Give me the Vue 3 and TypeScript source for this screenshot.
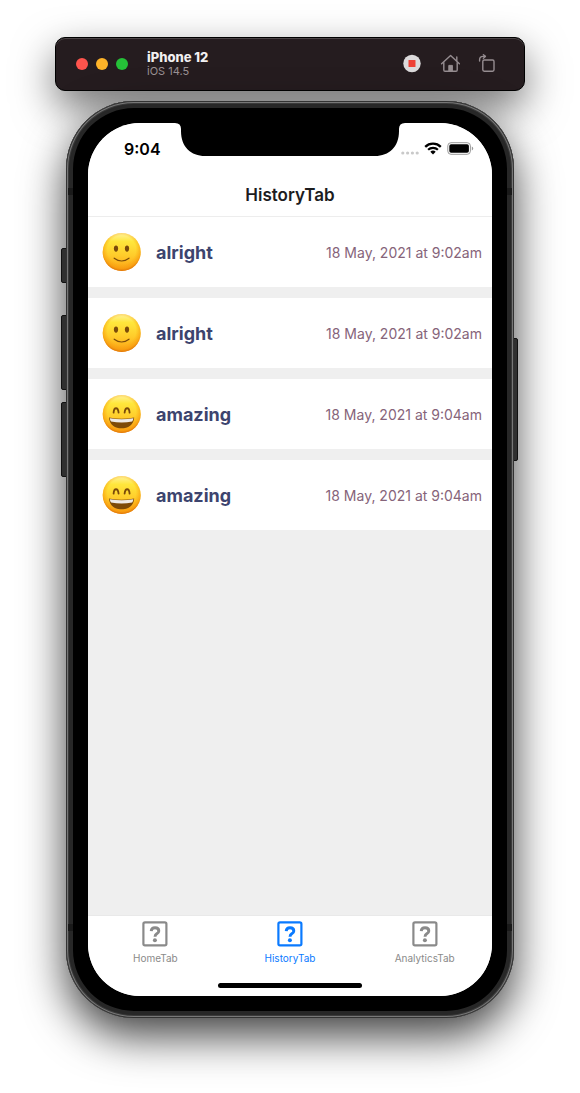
<script setup lang="ts">
type Mood = 'alright' | 'amazing'

interface Entry {
  id: number
  mood: Mood
  date: string
}

interface Tab {
  id: string
  active: boolean
}

const entries: Entry[] = [
  { id: 1, mood: 'alright', date: '18 May, 2021 at 9:02am' },
  { id: 2, mood: 'alright', date: '18 May, 2021 at 9:02am' },
  { id: 3, mood: 'amazing', date: '18 May, 2021 at 9:04am' },
  { id: 4, mood: 'amazing', date: '18 May, 2021 at 9:04am' },
]

const tabs: Tab[] = [
  { id: 'HomeTab', active: false },
  { id: 'HistoryTab', active: true },
  { id: 'AnalyticsTab', active: false },
]
</script>

<template>
  <div class="desktop">
    <header class="toolbar">
      <div class="lights">
        <button class="light red" type="button" aria-label="Close"></button>
        <button class="light amber" type="button" aria-label="Minimize"></button>
        <button class="light green" type="button" aria-label="Zoom"></button>
      </div>
      <div class="device-name">
        <strong>iPhone 12</strong>
        <span>iOS 14.5</span>
      </div>
      <div class="actions">
        <button type="button" aria-label="Stop recording">
          <svg width="20" height="20" viewBox="0 0 20 20">
            <circle cx="10" cy="9.5" r="8.7" fill="#dcdadb" />
            <rect x="6.5" y="6" width="7" height="7" rx=".6" fill="#ee4035" />
          </svg>
        </button>
        <button type="button" aria-label="Home">
          <svg width="20" height="20" viewBox="0 0 20 20" fill="none" stroke="#968d91" stroke-width="1.4" stroke-linecap="round" stroke-linejoin="round">
            <path d="M1.6 9.8 L10.6 1.6 L19.4 9.8" />
            <path d="M3.8 8.6 V16 Q3.8 17.3 5 17.3 H16 Q17.2 17.3 17.2 16 V8.6" />
            <path d="M16.8 6.6 V3" />
            <path d="M8.8 17 V11.4 H12.4 V17 Z" fill="#968d91" stroke-width="1" />
          </svg>
        </button>
        <button type="button" aria-label="Rotate">
          <svg width="20" height="20" viewBox="0 0 20 20" fill="none" stroke="#968d91" stroke-width="1.4" stroke-linecap="round" stroke-linejoin="round">
            <rect x="4.8" y="6" width="11.2" height="11.2" rx="1.4" />
            <path d="M1.6 7 V5.8 Q1.6 2.4 5 2.4 H7" />
            <path d="M5.4 .8 L7.4 2.4 L5.4 4.2" />
          </svg>
        </button>
      </div>
    </header>

    <main class="phone">
      <i class="key mute"></i>
      <i class="key volume-up"></i>
      <i class="key volume-down"></i>
      <i class="key power"></i>
      <div class="frame">
        <i class="band band-top"></i>
        <i class="band band-bottom"></i>
        <div class="screen">
          <svg class="notch" width="230" height="33" viewBox="0 0 230 33">
            <path d="M0 0 Q6 0 6 6 V8 C6 24 16 33 30 33 H200 C214 33 224 24 224 8 V6 Q224 0 230 0 Z" fill="#000" />
          </svg>
          <div class="status">
            <time>9:04</time>
            <div class="indicators">
              <svg width="18" height="14" viewBox="0 0 18 14" fill="#c9c9c9">
                <circle cx="1.8" cy="11" r="1.6" /><circle cx="6.6" cy="11" r="1.6" />
                <circle cx="11.4" cy="11" r="1.6" /><circle cx="16.2" cy="11" r="1.6" />
              </svg>
              <svg width="18" height="14" viewBox="0 0 18 14">
                <path d="M1.2 4.8 A11.2 11.2 0 0 1 16.8 4.8" fill="none" stroke="#000" stroke-width="2.3" />
                <path d="M4.1 7.8 A7 7 0 0 1 13.9 7.8" fill="none" stroke="#000" stroke-width="2.2" />
                <path d="M6.3 9.8 A4 4 0 0 1 11.7 9.8 L9 12.6 Z" fill="#000" />
              </svg>
              <svg width="27" height="14" viewBox="0 0 27 14">
                <rect x=".8" y=".7" width="22.6" height="11.6" rx="3.2" fill="none" stroke="#999" />
                <rect x="2.3" y="2.2" width="19.6" height="8.6" rx="1.8" fill="#000" />
                <path d="M24.8 4.6 Q26.2 5.1 26.2 6.5 Q26.2 7.9 24.8 8.4 Z" fill="#999" />
              </svg>
            </div>
          </div>
          <h1 class="title">HistoryTab</h1>
          <ul class="list">
            <li v-for="entry in entries" :key="entry.id" class="row">
              <svg class="face" width="40" height="40" viewBox="0 0 40 40">
                <defs>
                  <linearGradient :id="`skin-${entry.id}`" x1="0" y1="0" x2="0" y2="1">
                    <stop offset="0" stop-color="#fff2a0" />
                    <stop offset=".22" stop-color="#ffe73c" />
                    <stop offset=".6" stop-color="#ffcb2a" />
                    <stop offset="1" stop-color="#fb9f14" />
                  </linearGradient>
                  <radialGradient :id="`rim-${entry.id}`" cx=".5" cy=".44" r=".56">
                    <stop offset=".66" stop-color="#f9a40c" stop-opacity="0" />
                    <stop offset=".88" stop-color="#f6980c" stop-opacity=".6" />
                    <stop offset="1" stop-color="#dc6f08" stop-opacity=".95" />
                  </radialGradient>
                </defs>
                <circle cx="19.7" cy="20" r="19" :fill="`url(#skin-${entry.id})`" />
                <circle cx="19.7" cy="20" r="19" :fill="`url(#rim-${entry.id})`" />
                <g v-if="entry.mood === 'alright'">
                  <ellipse cx="14" cy="16.6" rx="2.1" ry="3.1" fill="#7a4a0a" />
                  <ellipse cx="25" cy="16.6" rx="2.1" ry="3.1" fill="#7a4a0a" />
                  <path d="M12.2 26.2 Q19.6 31.8 27 26.2" fill="none" stroke="#7a4a0a" stroke-width="1.2" stroke-linecap="round" />
                </g>
                <g v-else>
                  <path d="M11.6 18.6 C12 12.8 16 12.8 16.6 18.6" fill="none" stroke="#7a4a0a" stroke-width="1.8" stroke-linecap="round" />
                  <path d="M22.6 18.6 C23.2 12.8 27.2 12.8 27.6 18.6" fill="none" stroke="#7a4a0a" stroke-width="1.8" stroke-linecap="round" />
                  <path d="M7 23.4 Q19.6 26 32.2 23.4 C31.6 38 7.6 38 7 23.4 Z" fill="#7d4a08" />
                  <path d="M7.8 24.2 Q19.6 26.4 31.4 24.2 Q31.2 26 30.2 27.4 Q19.6 29.4 9 27.4 Q8 26 7.8 24.2 Z" fill="#eeeae6" />
                </g>
              </svg>
              <span class="mood">{{ entry.mood }}</span>
              <time class="date">{{ entry.date }}</time>
            </li>
          </ul>
          <footer class="footer">
            <nav class="tabs">
              <a v-for="tab in tabs" :key="tab.id" :href="`#${tab.id}`" class="tab" :class="{ active: tab.active }">
                <svg width="26" height="26" viewBox="0 0 26 26" fill="none" stroke="currentColor">
                  <rect x="1.4" y="1.4" width="23" height="23" rx="1.6" stroke-width="2.2" />
                  <path d="M9.2 10.2 Q9.4 6.8 13 6.8 Q16.8 6.8 16.8 10 Q16.8 11.4 15 12.6 Q13 13.8 13 15.8" stroke-width="2.9" />
                  <circle cx="12.9" cy="19.2" r="2" fill="currentColor" stroke="none" />
                </svg>
                <span>{{ tab.id }}</span>
              </a>
            </nav>
            <div class="home-bar"></div>
          </footer>
        </div>
      </div>
    </main>
  </div>
</template>

<style>
body {
  margin: 0;
  background: #fff;
}
</style>

<style scoped>
.desktop {
  box-sizing: border-box;
  min-height: 100vh;
  padding: 37px 55px 75px;
  display: flex;
  flex-direction: column;
  gap: 10px;
  overflow: hidden;
  font-family: Inter, "Liberation Sans", sans-serif;
}
button {
  padding: 0;
  border: 0;
  background: none;
}
svg {
  display: block;
  flex: none;
}
.toolbar {
  box-sizing: border-box;
  height: 54px;
  padding: 0 26px 0 20px;
  display: flex;
  align-items: center;
  border: 1px solid #000;
  border-radius: 10px;
  background: #251c1f;
  box-shadow: inset 0 1px 0 #4b4446, 0 16px 40px rgba(0, 0, 0, .55);
}
.lights {
  display: flex;
  gap: 8px;
  margin-right: 19px;
}
.light {
  width: 12px;
  height: 12px;
  border-radius: 50%;
}
.red { background: #ff544d; }
.amber { background: #ffb429; }
.green { background: #25c138; }
.device-name {
  display: flex;
  flex-direction: column;
  font-size: 11px;
  line-height: 14px;
  color: #9b9295;
}
.device-name strong {
  font-size: 13px;
  font-weight: 800;
  color: #f2f0f1;
}
.actions {
  margin-left: auto;
  display: flex;
  gap: 18px;
}
.phone {
  position: relative;
  flex: 1;
  margin: 0 11px;
  display: flex;
  border-radius: 68px;
  box-shadow: 0 18px 44px rgba(0, 0, 0, .75);
}
.frame {
  position: relative;
  flex: 1;
  min-width: 0;
  padding: 22px;
  display: flex;
  border-radius: 68px;
  background: #000;
  box-shadow: inset 0 0 0 1px #333, inset 0 0 0 2px #777, inset 0 0 0 3px #3a3a3a, inset 0 0 0 7px #272727;
}
.key {
  position: absolute;
  box-sizing: border-box;
  width: 8px;
  left: -5px;
  border: 1px solid #111;
  border-radius: 2px;
  background: #303030;
}
.mute { top: 147px; height: 35px; }
.volume-up { top: 214px; height: 75px; }
.volume-down { top: 301px; height: 75px; }
.power { left: auto; right: -4px; top: 237px; height: 123px; }
.band {
  position: absolute;
  left: 2px;
  right: 2px;
  height: 7px;
  border: solid #1a1a1a;
  border-width: 0 5px;
}
.band-top { top: 87px; }
.band-bottom { bottom: 87px; }
.screen {
  position: relative;
  flex: 1;
  min-width: 0;
  display: flex;
  flex-direction: column;
  overflow: hidden;
  border-radius: 52px;
  background: #efefef;
}
.notch {
  position: absolute;
  top: 0;
  left: 50%;
  margin-left: -115px;
}
.status {
  height: 52px;
  padding: 0 18px 0 36px;
  display: flex;
  align-items: center;
  justify-content: space-between;
  background: #fff;
  font-size: 16px;
  font-weight: 600;
  color: #000;
}
.indicators {
  display: flex;
  gap: 5px;
}
.title {
  margin: 0;
  padding-bottom: 1px;
  border-bottom: 1px solid #ededed;
  background: #fff;
  font-size: 17px;
  line-height: 40px;
  font-weight: 600;
  text-align: center;
  color: #1c1c1e;
}
.list {
  flex: 1;
  margin: 0;
  padding: 0;
  display: flex;
  flex-direction: column;
  gap: 11px;
  list-style: none;
}
.row {
  height: 70px;
  padding: 0 10px 0 14px;
  display: flex;
  align-items: center;
  background: #fff;
}
.mood {
  margin-left: 14px;
  font-size: 18px;
  font-weight: 700;
  color: #3d446e;
}
.date {
  margin-left: auto;
  font-size: 14px;
  color: #86647a;
}
.footer {
  padding: 5px 0 8px;
  border-top: 1px solid #e9e9e9;
  background: #fff;
}
.tabs {
  display: flex;
}
.tab {
  flex: 1;
  display: flex;
  flex-direction: column;
  align-items: center;
  gap: 4px;
  font-size: 10px;
  line-height: 14px;
  text-decoration: none;
  color: #8a8a8a;
}
.tab.active {
  color: #0a7aff;
}
.home-bar {
  width: 144px;
  height: 5px;
  margin: 18px auto 0;
  border-radius: 3px;
  background: #000;
}
</style>
